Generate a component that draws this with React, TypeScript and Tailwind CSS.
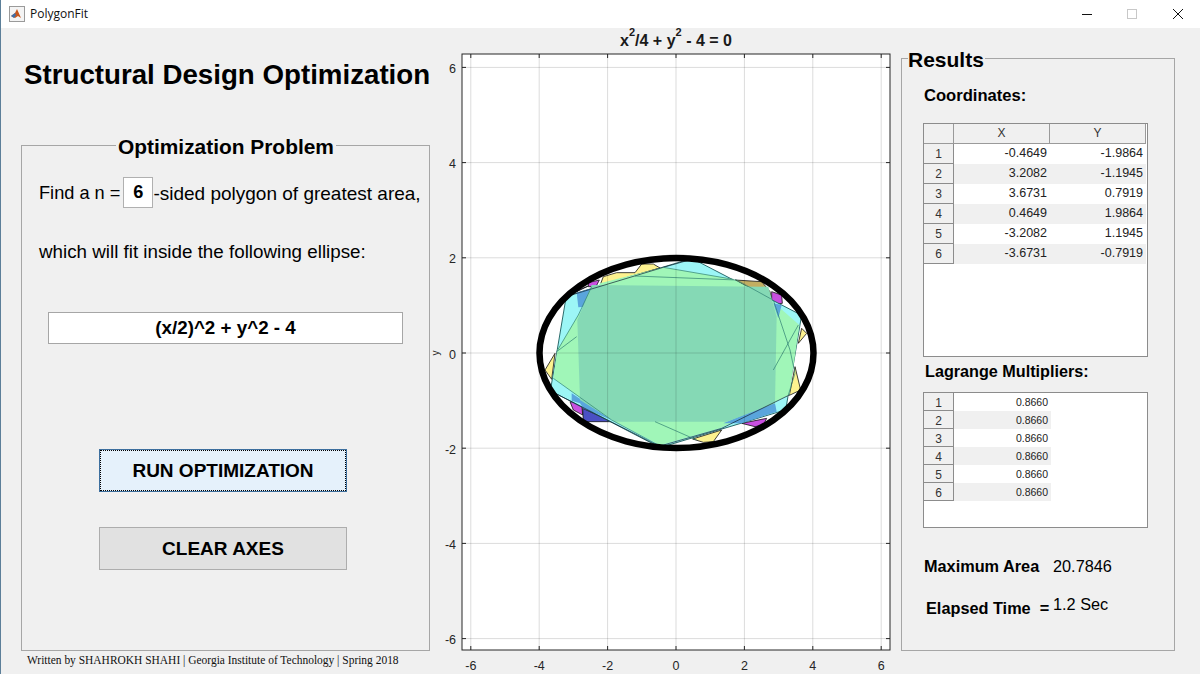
import React from "react";

const coords = [
	["-0.4649", "-1.9864"],
	["3.2082", "-1.1945"],
	["3.6731", "0.7919"],
	["0.4649", "1.9864"],
	["-3.2082", "1.1945"],
	["-3.6731", "-0.7919"],
];
const xTicks = [-6, -4, -2, 0, 2, 4, 6];
const yTicks = [-6, -4, -2, 0, 2, 4, 6];
const px = (x: number) => 676 + x * 34.2;
const py = (y: number) => 353 - y * 47.6;

// helpers to write polygon points from a crop origin at 3x
const z = (ox: number, oy: number, pts: number[][]) =>
	pts.map(([x, y]) => `${ox + x / 3},${oy + y / 3}`).join(" ");

const Plot = () => (
	<svg viewBox="432 52 468 622" className="w-[468px] h-[622px] block overflow-visible">
		<rect x="462" y="54" width="428" height="596" fill="#fff" />

		{/* patches behind the big polygons */}
		<g stroke="#111" strokeWidth="0.8">
			<polygon points={z(560, 250, [[130, 80], [170, 68], [225, 68], [245, 42], [280, 42], [300, 54], [222, 76], [120, 106]])} fill="#fdf28f" />
			<polygon points={z(690, 250, [[135, 90], [215, 95], [240, 125], [245, 152]])} fill="#c2ae62" />
			<polygon points={z(690, 250, [[335, 235], [350, 250], [325, 280]])} fill="#fdf28f" />
			<polygon points={z(520, 240, [[105, 340], [95, 418], [75, 390]])} fill="#fdf28f" />
			<polygon points={z(680, 360, [[345, 20], [362, 90], [328, 106]])} fill="#fdf28f" />
			<polygon points={z(680, 360, [[38, 237], [125, 210], [100, 245], [70, 247]])} fill="#fdf28f" />
			<polygon points={z(560, 250, [[85, 98], [118, 90], [108, 110], [85, 110]])} fill="#c94fe0" />
			<polygon points={z(690, 250, [[245, 125], [275, 135], [277, 160], [260, 162], [245, 150]])} fill="#c94fe0" />
			<polygon points={z(540, 360, [[90, 125], [125, 130], [128, 165], [100, 150]])} fill="#c94fe0" />
			<polygon points={z(680, 360, [[185, 190], [260, 175], [250, 195], [225, 200]])} fill="#c94fe0" />
			<polygon points={z(540, 360, [[128, 145], [215, 185], [130, 185]])} fill="#4a50c4" />
			<polygon points={z(560, 250, [[50, 125], [85, 108], [60, 118]])} fill="#4a50c4" />
		</g>

		<polygon
			points={[
				[-0.4649, -1.9864],
				[3.2082, -1.1945],
				[3.6731, 0.7919],
				[0.4649, 1.9864],
				[-3.2082, 1.1945],
				[-3.6731, -0.7919],
			]
				.map(([x, y]) => `${px(x)},${py(y)}`)
				.join(" ")}
			fill="#9cf6f6"
			stroke="#1a5a5a"
			strokeWidth="0.9"
		/>

		<polygon
			points={z(520, 240, [[430, 82], [640, 118], [750, 178], [838, 255], [808, 465], [600, 565], [420, 616], [275, 540], [100, 415], [112, 330], [175, 225], [240, 130]])}
			fill="#a0f6b8"
		/>

		{/* blue overlaps */}
		<g fill="#5aa5dc">
			<polygon points={z(560, 250, [[50, 128], [105, 112], [75, 170], [55, 172]])} />
			<polygon points={z(690, 250, [[250, 160], [275, 165], [265, 205]])} />
			<polygon points={z(540, 360, [[95, 100], [215, 180], [130, 145], [120, 130], [95, 122]])} />
			<polygon points={z(680, 360, [[130, 190], [260, 135], [285, 130], [290, 155], [185, 190]])} />
		</g>

		<polygon
			points={z(520, 240, [[215, 135], [745, 140], [770, 230], [765, 490], [620, 545], [285, 545], [180, 480], [172, 240]])}
			fill="#85d9b5"
		/>

		{/* polygon edges seen through the fill */}
		<g fill="none" stroke="#2f7f72" strokeWidth="0.7">
			<polyline points={z(520, 240, [[138, 170], [430, 82], [515, 58]])} stroke="#123" />
			<polyline points={z(520, 240, [[430, 82], [640, 118]])} />
			<polyline points={z(520, 240, [[345, 108], [650, 120], [755, 178]])} />
			<polyline points={z(520, 240, [[760, 180], [810, 330], [825, 400], [805, 465]])} />
			<polyline points={z(520, 240, [[835, 255], [760, 390]])} />
			<polyline points={z(520, 240, [[92, 453], [420, 620]])} stroke="#123" />
			<polyline points={z(520, 240, [[100, 415], [275, 540], [420, 618]])} />
			<polyline points={z(520, 240, [[420, 618], [605, 565], [808, 465]])} stroke="#123" />
			<polyline points={z(520, 240, [[110, 335], [175, 225], [215, 140]])} />
			<polyline points={z(520, 240, [[110, 335], [170, 290]])} />
			<polyline points={z(520, 240, [[405, 545], [530, 600]])} />
		</g>

		{/* grid */}
		<g stroke="#000" strokeOpacity="0.14" strokeWidth="1">
			{xTicks.map((t) => (
				<line key={t} x1={px(t)} x2={px(t)} y1="54" y2="650" />
			))}
			{yTicks.map((t) => (
				<line key={t} x1="462" x2="890" y1={py(t)} y2={py(t)} />
			))}
		</g>

		<ellipse cx="676.5" cy="353" rx="137" ry="95" fill="none" stroke="#000" strokeWidth="6.5" />

		{/* axes box and ticks */}
		<rect x="462" y="54" width="428" height="596" fill="none" stroke="#262626" strokeWidth="1" />
		<g stroke="#262626" strokeWidth="1">
			{xTicks.map((t) => (
				<g key={t}>
					<line x1={px(t)} x2={px(t)} y1="54" y2="58" />
					<line x1={px(t)} x2={px(t)} y1="646" y2="650" />
				</g>
			))}
			{yTicks.map((t) => (
				<g key={t}>
					<line x1="462" x2="466" y1={py(t)} y2={py(t)} />
					<line x1="886" x2="890" y1={py(t)} y2={py(t)} />
				</g>
			))}
		</g>

		<g fontFamily="'Liberation Sans', Arial, sans-serif" fontSize="12.5" fill="#262626">
			{xTicks.map((t) => (
				<text key={t} x={px(t)} y="670" textAnchor="middle">
					{t}
				</text>
			))}
			{yTicks.map((t) => (
				<text key={t} x="456" y={py(t) + 5.5} textAnchor="end">
					{t}
				</text>
			))}
			<text transform="translate(439 353) rotate(-90)" textAnchor="middle" fontSize="10">
				y
			</text>
		</g>
	</svg>
);

const App = () => {
	return (
		<div className="w-[1200px] h-[674px] overflow-hidden bg-[#f0f0f0] text-black border-l border-l-[#5c7f99] font-['Liberation_Sans',Arial,sans-serif]">
			{/* Title bar */}
			<div className="h-[28px] bg-white flex items-center">
				<svg width="16" height="16" viewBox="0 0 16 16" className="ml-[8px]">
					<rect x="0.5" y="0.5" width="15" height="15" fill="#f4f4f4" stroke="#9a9a9a" />
					<polygon points="2,10 6,7 8,3 12,12 9,10 6,12" fill="#c8551b" />
					<polygon points="2,10 6,7 7,9 5,12" fill="#3f6fa8" />
				</svg>
				<span className="ml-[5px] text-[12px] font-['Open_Sans',sans-serif] text-[#111]">PolygonFit</span>
				<div className="ml-auto flex items-center">
					<svg width="12" height="12" viewBox="0 0 12 12" className="mr-[33px]">
						<line x1="1" x2="11" y1="6.5" y2="6.5" stroke="#111" />
					</svg>
					<svg width="12" height="12" viewBox="0 0 12 12" className="mr-[34px]">
						<rect x="1.5" y="1.5" width="9" height="9" fill="none" stroke="#c8c8c8" />
					</svg>
					<svg width="12" height="12" viewBox="0 0 12 12" className="mr-[16px]">
						<path d="M1 1 L11 11 M11 1 L1 11" stroke="#111" fill="none" />
					</svg>
				</div>
			</div>

			<div className="flex">
				{/* Left column */}
				<div className="w-[431px] shrink-0">
					<h1 className="ml-[23px] mt-[31px] h-[32px] text-[27.7px] leading-[32px] font-bold whitespace-nowrap">
						Structural Design Optimization
					</h1>
					<fieldset className="ml-[20px] mt-[40px] w-[409px] h-[520px] border border-[#a6a6a6]">
						<legend className="ml-[94px] px-[2px] pt-[4px] text-[20.9px] leading-[24px] font-bold">Optimization Problem</legend>
						<div className="ml-[17px] mt-[18px] h-[31px] flex items-center text-[18.2px] whitespace-nowrap">
							<span className="mt-[3px]">Find a n =</span>
							<div className="ml-[3px] w-[30px] h-[31px] bg-white border border-[#b0b0b0] flex items-center justify-center font-bold">
								6
							</div>
							<span className="mt-[3px] text-[19px]">-sided polygon of greatest area,</span>
						</div>
						<div className="ml-[17px] mt-[32px] h-[24px] leading-[24px] text-[18.8px] whitespace-nowrap">
							which will fit inside the following ellipse:
						</div>
						<div className="ml-[26px] mt-[48px] w-[355px] h-[32px] bg-white border border-[#a6a6a6] flex items-center justify-center text-[18.8px] font-bold">
							(x/2)^2 + y^2 - 4
						</div>
						<button className="block ml-[77px] mt-[105px] w-[248px] h-[43px] pt-[2px] bg-[#e5f1fb] border border-[#3d6f9e] outline-1 outline-dotted outline-black -outline-offset-2 text-[19px] font-bold">
							RUN OPTIMIZATION
						</button>
						<button className="block ml-[77px] mt-[35px] w-[248px] h-[43px] pt-[2px] bg-[#e1e1e1] border border-[#adadad] text-[19px] font-bold">
							CLEAR AXES
						</button>
					</fieldset>
					<p className="ml-[26px] mt-[2px] text-[11.46px] leading-[14px] font-['Liberation_Serif',serif] whitespace-nowrap text-[#111]">
						Written by SHAHROKH SHAHI | Georgia Institute of Technology | Spring 2018
					</p>
				</div>

				{/* Plot */}
				<div className="w-[468px] shrink-0">
					<div className="h-[24px] pl-[20px] pt-[2px] text-center text-[16px] leading-[22px] font-bold text-[#1a1a1a] whitespace-nowrap">
						x<sup className="text-[11px] align-[5px] leading-none">2</sup>/4 + y
						<sup className="text-[11px] align-[5px] leading-none">2</sup> - 4 = 0
					</div>
					<Plot />
				</div>

				{/* Results */}
				<div className="flex-1">
					<fieldset className="ml-[1px] mt-[16px] w-[274px] h-[607px] border border-[#a6a6a6]">
						<legend className="ml-[6px] pr-[1px] pt-[4px] text-[21px] leading-[24px] font-bold">Results</legend>
						<div className="ml-[22px] mt-[14px] h-[20px] leading-[20px] text-[16.6px] font-bold">Coordinates:</div>
						<div className="ml-[21px] mt-[17px] w-[225px] h-[234px] bg-white border border-[#8c8c8c]">
							<div className="flex h-[20px] text-[12px] text-[#333]">
								<div className="w-[30px] bg-[#f0f0f0] border-r border-b border-[#9a9a9a]" />
								<div className="w-[96px] bg-[#f0f0f0] border-r border-b border-[#9a9a9a] text-center leading-[19px]">X</div>
								<div className="w-[96px] bg-[#f0f0f0] border-r border-b border-[#9a9a9a] text-center leading-[19px]">Y</div>
							</div>
							{coords.map(([x, y], i) => (
								<div key={i} className="flex h-[20px] leading-[19px]">
									<div className="w-[30px] bg-[#f0f0f0] border-r border-b border-[#8c8c8c] text-center text-[12px] leading-[21px] text-[#333]">{i + 1}</div>
									<div className={`w-[96px] pr-[3px] text-right text-[12.5px] text-[#222] ${i % 2 ? "bg-[#f0f0f0]" : "bg-white"}`}>{x}</div>
									<div className={`w-[96px] pr-[3px] text-right text-[12.5px] text-[#222] ${i % 2 ? "bg-[#f0f0f0]" : "bg-white"}`}>{y}</div>
								</div>
							))}
						</div>
						<div className="ml-[23px] mt-[4px] h-[20px] leading-[20px] text-[16.2px] font-bold">Lagrange Multipliers:</div>
						<div className="ml-[21px] mt-[11px] w-[225px] h-[136px] bg-white border border-[#8c8c8c]">
							{coords.map((_, i) => (
								<div key={i} className="flex h-[18px] leading-[19px]">
									<div className="w-[30px] bg-[#f0f0f0] border-r border-b border-[#8c8c8c] text-center text-[12px] leading-[20px] text-[#333]">{i + 1}</div>
									<div className={`w-[97px] pr-[3px] text-right text-[10.5px] text-[#222] ${i % 2 ? "bg-[#f0f0f0]" : "bg-white"}`}>0.8660</div>
								</div>
							))}
						</div>
						<div className="ml-[22px] mt-[28px] h-[20px] flex leading-[20px] text-[16.3px] whitespace-nowrap">
							<span className="w-[129px] font-bold">Maximum Area</span>
							<span>20.7846</span>
						</div>
						<div className="ml-[24px] mt-[18px] h-[24px] flex items-start leading-[20px] text-[16.3px] whitespace-nowrap">
							<span className="w-[127px] mt-[4px] font-bold">Elapsed Time&nbsp; =</span>
							<span>1.2 Sec</span>
						</div>
					</fieldset>
				</div>
			</div>
		</div>
	);
};

export default App;
